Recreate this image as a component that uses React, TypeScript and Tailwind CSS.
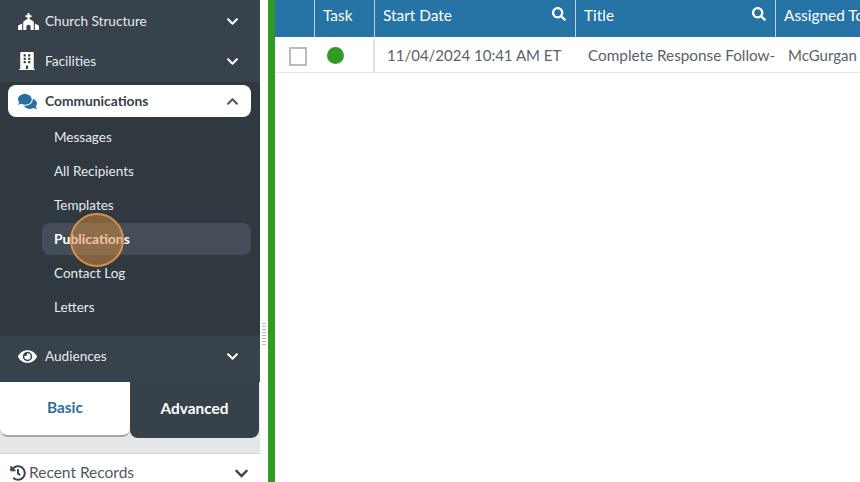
import type { ReactNode } from "react";
import { FaBuilding, FaChevronDown, FaChevronUp, FaChurch, FaComments, FaEye, FaHistory, FaSearch } from "react-icons/fa";

type NavRowProps = {
  icon: ReactNode;
  label: string;
};

function NavRow({ icon, label }: NavRowProps) {
  return (
    <div className="flex h-10 items-center pl-[18px] pr-[21px] text-[13.6px] text-[#e8eaeb]">
      <span className="flex w-[27px] text-white">{icon}</span>
      <span className="flex-1">{label}</span>
      <FaChevronDown className="mt-px text-[13px] text-white" />
    </div>
  );
}

const subItems = ["Messages", "All Recipients", "Templates", "Publications", "Contact Log", "Letters"];

function Sidebar() {
  return (
    <aside className="flex h-[482px] w-[260px] shrink-0 flex-col overflow-hidden bg-white">
      <div className="h-[82px] shrink-0 bg-[#37424b] pt-px">
        <NavRow icon={<FaChurch className="text-[21px]" />} label="Church Structure" />
        <NavRow icon={<FaBuilding className="text-[18px]" />} label="Facilities" />
      </div>

      <div className="h-[254px] shrink-0 bg-[#2f393f] pl-2 pr-[9px] pt-[3px]">
        <div className="flex h-8 items-center rounded-lg bg-white pl-2.5 pr-3 text-[13.8px] font-bold text-[#36414a]">
          <FaComments className="mr-2 w-[19px] text-[19px] text-[#266fa3]" />
          <span className="flex-1">Communications</span>
          <FaChevronUp className="text-[13px] text-[#4b5660]" />
        </div>
        <ul className="mt-1 pl-[34px]">
          {subItems.map((item) => (
            <li
              key={item}
              className={
                item === "Publications"
                  ? "mb-0.5 flex h-8 items-center rounded-lg bg-[#454e58] pl-3 text-[13.9px] font-bold text-white"
                  : "mb-0.5 flex h-8 items-center pl-3 text-[13.5px] text-[#e8eaeb]"
              }
            >
              {item}
            </li>
          ))}
        </ul>
      </div>

      <div className="h-[46px] shrink-0 bg-[#37424b]">
        <NavRow icon={<FaEye className="text-[19px]" />} label="Audiences" />
      </div>

      <div className="flex h-[56px] shrink-0 bg-[#e6e7e8] pr-px text-[15.4px] font-bold">
        <div className="flex h-[55px] w-[130px] items-center justify-center rounded-b-lg border-b-2 border-[#a4a7aa] bg-white pb-px text-[#2e6f9e]">
          Basic
        </div>
        <div className="flex flex-1 items-center justify-center rounded-b-lg bg-[#36414a] pb-[3px] text-white">Advanced</div>
      </div>

      <div className="flex h-4 shrink-0 items-center justify-center border-b border-[#d5d7d9] bg-[#e6e7e8] pt-px">
        <span className="h-[4px] w-6 bg-[radial-gradient(#a9aeb2_0.6px,transparent_0.6px)] bg-[length:3px_2px]" />
      </div>

      <div className="flex h-[38px] shrink-0 items-center pl-[10px] pr-[11px] text-[15.5px] text-[#50585f]">
        <FaHistory className="mr-[3px] text-[16px] text-[#3d454c]" />
        <span className="flex-1">Recent Records</span>
        <FaChevronDown className="text-[15px] text-[#3d454c]" />
      </div>
    </aside>
  );
}

type HeaderCellProps = {
  label?: string;
  width: string;
  search?: boolean;
};

function HeaderCell({ label, width, search }: HeaderCellProps) {
  return (
    <div className={`relative flex h-full shrink-0 border-r border-[#b9d2e4] pl-2 pr-2 pt-1 ${width}`}>
      <span className="flex-1 whitespace-nowrap">{label}</span>
      {search && <FaSearch className="absolute right-[9px] top-[7px] text-[14px] text-white" />}
    </div>
  );
}

function TaskGrid() {
  return (
    <main className="min-w-0 flex-1 overflow-hidden bg-white">
      <div className="flex h-[37px] w-[640px] bg-[#2673a6] text-[15.4px] text-white">
        <HeaderCell width="w-[40px]" />
        <HeaderCell width="w-[60px]" label="Task" />
        <HeaderCell width="w-[201px]" label="Start Date" search />
        <HeaderCell width="w-[200px]" label="Title" search />
        <div className="whitespace-nowrap pl-2 pt-1">Assigned To</div>
      </div>
      <div className="flex h-[36px] w-[640px] items-center border-b border-[#e6e7e8] pt-0.5 text-[15px] text-[#5b6268]">
        <div className="flex h-full w-[40px] shrink-0 items-center pl-[14px] pt-0.5">
          <span className="h-[19px] w-[18px] border-2 border-[#b9bcbf] bg-white" />
        </div>
        <div className="flex h-full w-[60px] shrink-0 items-center border-r-2 border-[#e0e1e3] pl-[12px]">
          <span className="h-[17px] w-[17px] rounded-full bg-[#2f9a24]" />
        </div>
        <div className="w-[201px] shrink-0 whitespace-nowrap pl-3">11/04/2024 10:41 AM ET</div>
        <div className="w-[200px] shrink-0 overflow-hidden whitespace-nowrap pl-3 text-[15.3px]">Complete Response Follow-</div>
        <div className="whitespace-nowrap pl-3">McGurgan</div>
      </div>
    </main>
  );
}

export default function App() {
  return (
    <div className="relative flex h-[482px] w-[860px] overflow-hidden bg-white font-['Lato',sans-serif]">
      <Sidebar />
      <div className="w-2 shrink-0 bg-white pl-[2px] pt-[322px]">
        <div className="h-[24px] w-[4px] bg-[radial-gradient(#b5b9bc_0.6px,transparent_0.6px)] bg-[length:2px_3px]" />
      </div>
      <div className="w-[7px] shrink-0 bg-[#2f9a24]" />
      <TaskGrid />
      <span className="absolute left-[70px] top-[213px] h-[54px] w-[54px] rounded-full border-2 border-[#d8914f] bg-[#d98a3c]/50" />
    </div>
  );
}
